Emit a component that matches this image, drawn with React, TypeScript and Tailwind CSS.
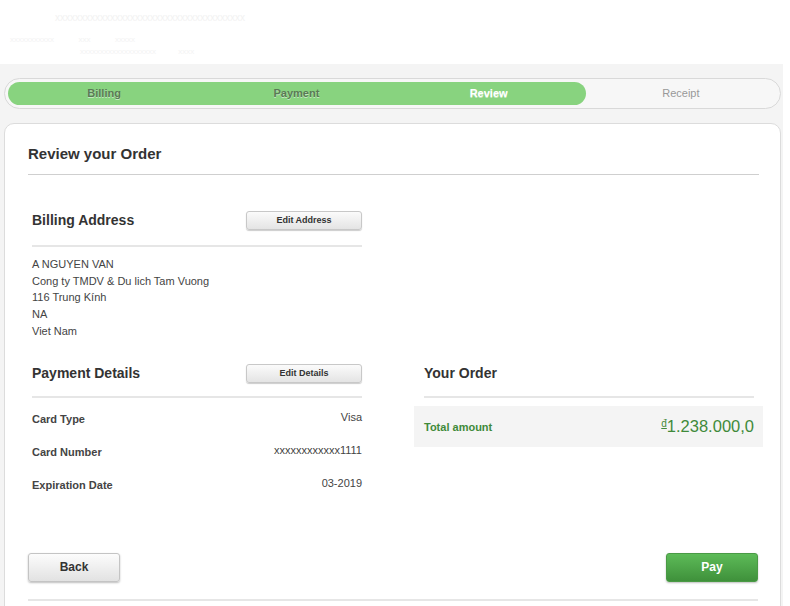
import React from "react";

const font = { fontFamily: '"Liberation Sans", Arial, sans-serif' };

function SmallBtn({ label }: { label: string }) {
  return (
    <button className="w-[116px] h-[19px] rounded-[3px] border border-[#c8c8c8] bg-gradient-to-b from-[#fbfbfb] to-[#e4e4e4] shadow-[0_1px_1px_rgba(0,0,0,0.2)] text-[9px] font-bold text-[#333] leading-none">
      {label}
    </button>
  );
}

function Row({ label, value }: { label: string; value: string }) {
  return (
    <div className="flex justify-between items-start h-[33px]">
      <span className="text-[11px] font-bold text-[#444] mt-[2px]">{label}</span>
      <span className="text-[11px] text-[#444]">{value}</span>
    </div>
  );
}

export default function App() {
  return (
    <div className="w-[790px] h-[606px] bg-white overflow-hidden" style={font}>
      <div className="h-[64px] relative">
        <div className="absolute left-[55px] top-[10px] text-[10px] text-[#f2f2f2]">xxxxxxxxxxxxxxxxxxxxxxxxxxxxxxxxxxxxxx</div>
        <div className="absolute left-[10px] top-[34px] text-[8px] text-[#f3f3f3]">xxxxxxxxxxx &nbsp;&nbsp;&nbsp;&nbsp;&nbsp;&nbsp;&nbsp;&nbsp;&nbsp; xxx &nbsp;&nbsp;&nbsp;&nbsp;&nbsp;&nbsp;&nbsp;&nbsp;&nbsp; xxxxx</div>
        <div className="absolute left-[80px] top-[46px] text-[8px] text-[#f3f3f3]">xxxxxxxxxxxxxxxxxxx &nbsp;&nbsp;&nbsp;&nbsp;&nbsp;&nbsp;&nbsp;&nbsp; xxxx</div>
      </div>
      <div className="w-[783px] h-[542px] bg-[#f4f4f4] pt-[14px] pl-[4px] pr-[2px]">
        <div className="h-[31px] rounded-full border border-[#d9d9d9] bg-[#f7f7f7] p-[3px] flex relative">
          <div className="absolute left-[3px] top-[3px] w-[578px] h-[23px] rounded-full bg-[#88d37f]" />
          {[
            ["Billing", "text-[#5a7a55]"],
            ["Payment", "text-[#5a7a55]"],
            ["Review", "text-white"],
            ["Receipt", "text-[#999] font-normal"],
          ].map(([l, c]) => (
            <div
              key={l}
              className={`relative flex-1 flex items-center justify-center text-[11px] font-bold ${c}`}
              style={{ textShadow: l === "Receipt" ? "none" : "0 1px 0 rgba(255,255,255,0.5)" }}
            >
              {l}
            </div>
          ))}
        </div>
        <div className="mt-[14px] h-[600px] bg-white rounded-t-[10px] border border-[#dcdcdc] pl-[23px] pr-[21px] pt-[20px]">
          <h1 className="text-[15px] font-bold text-[#333] leading-[20px] h-[30px]">Review your Order</h1>
          <div className="h-px bg-[#cfcfcf]" />
          <div className="flex mt-[30px]">
            <div className="w-[334px] shrink-0 pl-[4px]">
              <div className="flex justify-between items-center h-[40px] pb-[9px]">
                <span className="text-[14px] font-bold text-[#333]">Billing Address</span>
                <SmallBtn label="Edit Address" />
              </div>
              <div className="h-[2px] bg-[#e6e6e6]" />
              <div className="mt-[9px] text-[11px] text-[#444] leading-[16.7px]">
                <div>A NGUYEN VAN</div>
                <div>Cong ty TMDV &amp; Du lich Tam Vuong</div>
                <div>116 Trung Kính</div>
                <div>NA</div>
                <div>Viet Nam</div>
              </div>
              <div className="flex justify-between items-center h-[37px] mt-[19px] pb-[8px]">
                <span className="text-[14px] font-bold text-[#333]">Payment Details</span>
                <SmallBtn label="Edit Details" />
              </div>
              <div className="h-[2px] bg-[#e6e6e6]" />
              <div className="mt-[11px]">
                <Row label="Card Type" value="Visa" />
                <Row label="Card Number" value="xxxxxxxxxxxx1111" />
                <Row label="Expiration Date" value="03-2019" />
              </div>
            </div>
            <div className="ml-[52px] w-[349px] shrink-0 pt-[154px]">
              <div className="pl-[10px] pr-[9px]">
                <div className="h-[37px] flex items-center pb-[8px]">
                  <span className="text-[14px] font-bold text-[#333]">Your Order</span>
                </div>
                <div className="h-[2px] bg-[#e6e6e6]" />
              </div>
              <div className="mt-[8px] h-[41px] bg-[#f4f4f4] flex items-center justify-between pl-[10px] pr-[9px]">
                <span className="text-[11px] font-bold text-[#3f8a3a] mt-[2px]">Total amount</span>
                <span className="text-[16.5px] text-[#3f8a3a]">
                  <span className="text-[10px] underline align-[5px]">đ</span>1.238.000,0
                </span>
              </div>
            </div>
          </div>
          <div className="flex justify-between mt-[45px] pr-[1px]">
            <button className="w-[92px] h-[29px] rounded-[3px] border border-[#c4c4c4] bg-gradient-to-b from-[#fcfcfc] to-[#e2e2e2] shadow-[0_1px_2px_rgba(0,0,0,0.25)] text-[12px] font-bold text-[#333]">
              Back
            </button>
            <button className="w-[92px] h-[29px] rounded-[3px] border border-[#4a9a45] bg-gradient-to-b from-[#5dbb58] to-[#3f913b] shadow-[0_1px_2px_rgba(0,0,0,0.25)] text-[12px] font-bold text-white">
              Pay
            </button>
          </div>
          <div className="mt-[17px] h-[2px] bg-[#e6e6e6] mr-[1px]" />
        </div>
      </div>
    </div>
  );
}
